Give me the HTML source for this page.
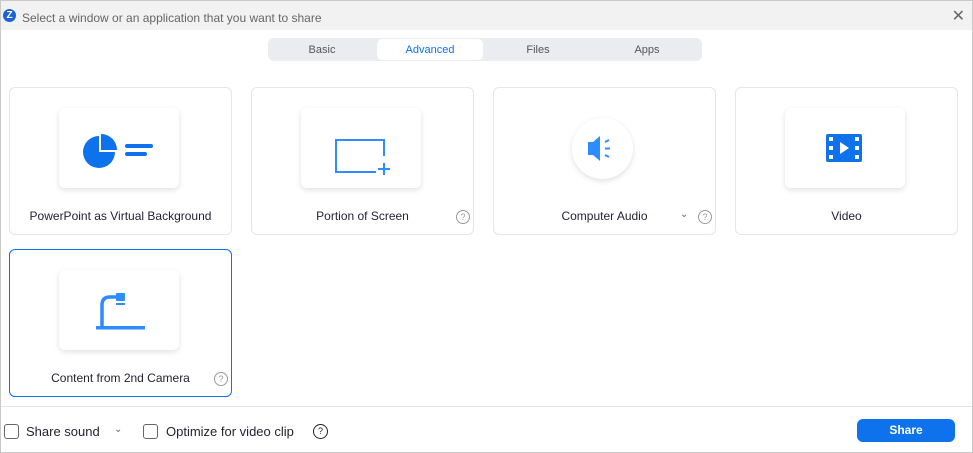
<!DOCTYPE html>
<html><head><style>
*{box-sizing:border-box;margin:0;padding:0}
body{width:973px;height:453px;background:#fff;font-family:"Liberation Sans",sans-serif;position:relative;overflow:hidden}
.frame{position:absolute;left:0;top:0;width:973px;height:453px;border:1px solid #c9c9c9;pointer-events:none}
.title{position:absolute;left:0;top:0;width:973px;height:30px;background:#f2f2f2;font-size:12px;color:#666}
.title span{position:absolute;left:22px;top:11px}
.logo{position:absolute;left:3px;top:9px;width:13px;height:13px;border-radius:50%;background:#1a62d6;color:#fff;font-size:10px;font-weight:bold;text-align:center;line-height:13px}
.x{position:absolute;right:8px;top:6px;font-size:16px;color:#666}
.tabs{position:absolute;left:268px;top:38px;width:434px;height:23px;background:#ebecf0;border-radius:6px;font-size:11px;color:#555}
.tabs div{position:absolute;top:0;height:23px;line-height:24px;text-align:center}
.tabs .act{background:#fff;border-radius:5px;color:#0e72ed;top:1px;height:21px;line-height:22px}
.card{position:absolute;width:223px;height:148px;border:1px solid #e5e5ea;border-radius:6px}
.tile{position:absolute;left:49px;top:20px;width:120px;height:80px;background:#fff;border-radius:6px;box-shadow:0 2px 6px rgba(0,0,0,.12)}
.lbl{position:absolute;left:0;width:100%;top:121px;text-align:center;font-size:12px;color:#232333}
.q{position:absolute;width:14px;height:14px;border:1px solid #999;border-radius:50%;font-size:9px;color:#999;text-align:center;line-height:12px}
.tile svg{position:absolute;left:0;top:0}
.foot{position:absolute;left:0;top:406px;width:973px;border-top:1px solid #e5e5e5}
.cb{position:absolute;width:15px;height:15px;border:1px solid #666;border-radius:3px;top:424px}
.ft{position:absolute;top:424px;font-size:13px;color:#232333}
.btn{position:absolute;left:857px;top:419px;width:98px;height:23px;background:#0e72ed;border-radius:6px;color:#fff;font-size:12px;font-weight:bold;text-align:center;line-height:23px}
</style></head><body>
<div class="title"><div class="logo">Z</div><span>Select a window or an application that you want to share</span><div class="x">✕</div></div>
<div class="tabs">
<div style="left:0;width:108px">Basic</div>
<div class="act" style="left:109px;width:106px">Advanced</div>
<div style="left:216px;width:108px">Files</div>
<div style="left:324px;width:110px">Apps</div>
</div>

<div class="card" style="left:9px;top:87px"><div class="tile"><svg width="120" height="80"><path d="M40 28 A16 16 0 1 0 56 44 L40 44 Z" fill="#0e72ed"/><path d="M42 26 A16 16 0 0 1 58 42 L42 42 Z" fill="#0e72ed"/><rect x="66" y="36" width="28" height="4" rx="2" fill="#0e72ed"/><rect x="66" y="44" width="22" height="4" rx="2" fill="#0e72ed"/></svg></div><div class="lbl">PowerPoint as Virtual Background</div></div>

<div class="card" style="left:251px;top:87px"><div class="tile"><svg width="120" height="80"><path d="M83 48 V32 H35 V64 H75" fill="none" stroke="#2d8cff" stroke-width="2"/><path d="M83 55 V67 M77 61 H89" stroke="#2d8cff" stroke-width="2"/></svg></div><div class="lbl">Portion of Screen</div><div class="q" style="left:204px;top:122px">?</div></div>

<div class="card" style="left:493px;top:87px"><div style="position:absolute;left:78px;top:30px;width:61px;height:61px;border-radius:50%;background:#fff;box-shadow:0 2px 6px rgba(0,0,0,.12)"><svg width="61" height="61"><path d="M16 24 H21 L28 18 V43 L21 37 H16 Z" fill="#2d8cff"/><path d="M33 24 L37 22 M33 30.5 H38 M33 37 L37 39" stroke="#2d8cff" stroke-width="2"/></svg></div><div class="lbl">Computer Audio</div><div style="position:absolute;left:186px;top:121px;font-size:10px;color:#666">⌄</div><div class="q" style="left:204px;top:122px">?</div></div>

<div class="card" style="left:735px;top:87px"><div class="tile"><svg width="120" height="80"><rect x="41" y="26" width="36" height="28" rx="2" fill="#0e72ed"/><g fill="#fff"><rect x="44" y="29" width="4" height="4"/><rect x="44" y="38" width="4" height="4"/><rect x="44" y="47" width="4" height="4"/><rect x="70" y="29" width="4" height="4"/><rect x="70" y="38" width="4" height="4"/><rect x="70" y="47" width="4" height="4"/><path d="M55 34 L64 40 L55 46 Z"/></g></svg></div><div class="lbl">Video</div></div>

<div class="card" style="left:9px;top:249px;border-color:#0e72ed"><div class="tile"><svg width="120" height="80"><path d="M43 57 V35 Q43 27 51 27 H58" fill="none" stroke="#2d8cff" stroke-width="3.5"/><rect x="57" y="23" width="9" height="8" rx="1" fill="#2d8cff"/><rect x="57" y="33" width="9" height="2" fill="#2d8cff"/><rect x="37" y="56" width="49" height="3.5" fill="#2d8cff"/></svg></div><div class="lbl">Content from 2nd Camera</div><div class="q" style="left:204px;top:122px">?</div></div>

<div class="foot"></div>
<div class="cb" style="left:4px"></div><div class="ft" style="left:26px">Share sound</div><div class="ft" style="left:114px;font-size:10px;color:#666">⌄</div>
<div class="cb" style="left:143px"></div><div class="ft" style="left:166px">Optimize for video clip</div>
<div class="q" style="left:313px;top:424px;border-color:#222;color:#222;width:15px;height:15px;border-width:1.5px">?</div>
<div class="btn">Share</div>
<div class="frame"></div>
</body></html>
